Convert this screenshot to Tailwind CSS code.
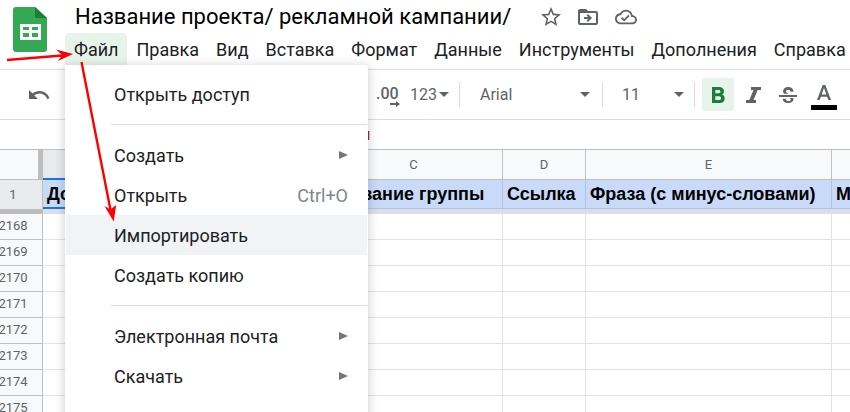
<!DOCTYPE html>
<html lang="ru">
<head>
  <meta charset="UTF-8" />
  <meta name="viewport" content="width=device-width, initial-scale=1" />
  <title>Название проекта/ рекламной кампании/</title>
  <script src="https://cdn.jsdelivr.net/npm/@tailwindcss/browser@4"></script>
</head>
<body class="relative h-screen overflow-hidden bg-white font-['Roboto',sans-serif] text-[#202124]">

  <!-- Header -->
  <header class="flex h-[70px] border-b border-[#dadce0]">
    <a href="#" aria-label="Таблицы" class="w-[65px] shrink-0 pl-[13px] pt-[7px]">
      <svg class="h-[45px] w-[34px]" viewBox="0 0 34 45">
        <path d="M3 0h19l12 11v31a3 3 0 0 1-3 3H3a3 3 0 0 1-3-3V3a3 3 0 0 1 3-3z" fill="#34a853" />
        <path d="M22 0l12 11H22z" fill="#188038" />
        <path fill-rule="evenodd" d="M7 17h21v16H7zM10 20v3h6v-3zM19 20v3h6v-3zM10 26v4h6v-4zM19 26v4h6v-4z" fill="#fff" />
      </svg>
    </a>
    <div class="min-w-0 flex-1">
      <div class="flex h-[33px] items-center text-[#5f6368]">
        <input type="text" aria-label="Название" value="Название проекта/ рекламной кампании/" class="w-[473px] pl-[10px] text-[22px] leading-8 text-black outline-none">
        <button type="button" aria-label="Пометить" class="flex w-[26px] justify-center">
          <svg class="size-6" viewBox="0 0 24 24" fill="currentColor"><path d="M22 9.24l-7.19-.62L12 2 9.19 8.63 2 9.24l5.46 4.73L5.82 21 12 17.27 18.18 21l-1.63-7.03L22 9.24zM12 15.4l-3.76 2.27 1-4.28-3.32-2.88 4.38-.38L12 6.1l1.71 4.04 4.38.38-3.32 2.88 1 4.28L12 15.4z" /></svg>
        </button>
        <button type="button" aria-label="Переместить" class="ml-[11px] flex w-[26px] justify-center">
          <svg class="size-6" viewBox="0 0 24 24" fill="currentColor"><path d="M20 6h-8l-2-2H4c-1.1 0-2 .9-2 2v12c0 1.100.9 2 2 2h16c1.100 0 2-.9 2-2V8c0-1.100-.9-2-2-2zm0 12H4V8h16v10zM12.200 14H8v-2h4.200l-1.600-1.600L12 9l4 4-4 4-1.400-1.400z" /></svg>
        </button>
        <button type="button" aria-label="Состояние документа" class="ml-[12px] flex w-[26px] justify-center">
          <svg class="size-[22px]" viewBox="0 0 24 24" fill="currentColor"><path d="M19.350 10.040C18.670 6.590 15.640 4 12 4 9.110 4 6.600 5.640 5.350 8.040 2.340 8.360 0 10.910 0 14c0 3.310 2.690 6 6 6h13c2.760 0 5-2.240 5-5 0-2.640-2.050-4.780-4.650-4.960zM19 18H6c-2.210 0-4-1.790-4-4 0-2.050 1.530-3.760 3.560-3.970l1.070-.11.5-.95C8.080 7.140 9.940 6 12 6c2.620 0 4.880 1.860 5.390 4.430l.3 1.500 1.530.11c1.560.1 2.780 1.410 2.780 2.960 0 1.650-1.350 3-3 3zM10 14.180l-2.090-2.090L6.500 13.500 10 17l6.010-6.010-1.410-1.410z" /></svg>
        </button>
      </div>
      <nav class="flex h-8 items-center gap-px text-[18px]">
        <button type="button" class="h-8 rounded-t-[4px] bg-[#e6f4ea] px-[9px]">Файл</button>
        <button type="button" class="h-8 px-2">Правка</button>
        <button type="button" class="h-8 px-2">Вид</button>
        <button type="button" class="h-8 px-2">Вставка</button>
        <button type="button" class="h-8 px-2">Формат</button>
        <button type="button" class="h-8 px-2">Данные</button>
        <button type="button" class="h-8 px-2">Инструменты</button>
        <button type="button" class="h-8 px-2">Дополнения</button>
        <button type="button" class="h-8 px-2">Справка</button>
      </nav>
    </div>
  </header>

  <!-- Toolbar -->
  <div class="flex h-[50px] items-center border-b border-[#dadce0] text-[16px] text-[#5f6368]">
    <button type="button" aria-label="Отменить" class="w-[376px] shrink-0 pl-[27px]">
      <svg class="size-6" viewBox="0 0 24 24" fill="currentColor"><path d="M12.500 8c-2.650 0-5.050.99-6.900 2.600L2 7v9h9l-3.620-3.620c1.390-1.160 3.160-1.880 5.120-1.880 3.540 0 6.550 2.310 7.600 5.500l2.370-.78C21.080 11.030 17.150 8 12.500 8z" /></svg>
    </button>
    <button type="button" aria-label="Увеличить число знаков" class="flex w-[34px] shrink-0 flex-col items-start pt-1 font-medium leading-4">
      .00
      <svg class="-mt-px ml-[14px] h-[6px] w-[10px]" viewBox="0 0 10 6" fill="currentColor"><path d="M0 2h6V0l4 3-4 3V4H0z" /></svg>
    </button>
    <button type="button" class="flex w-[49px] shrink-0 items-center gap-[2px]">
      123
      <svg class="h-[5px] w-[10px]" viewBox="0 0 10 5" fill="currentColor"><path d="M0 0h10L5 5z" /></svg>
    </button>
    <div class="flex h-[25px] w-[143px] shrink-0 items-center border-l border-[#dadce0] pl-5">
      <select aria-label="Шрифт" class="w-[100px] appearance-none outline-none"><option>Arial</option></select>
      <svg class="h-[5px] w-[10px]" viewBox="0 0 10 5" fill="currentColor"><path d="M0 0h10L5 5z" /></svg>
    </div>
    <div class="flex h-[25px] w-[92px] shrink-0 items-center border-l border-[#dadce0] pl-[19px]">
      <select aria-label="Размер шрифта" class="w-[52px] appearance-none outline-none"><option>11</option></select>
      <svg class="h-[5px] w-[10px]" viewBox="0 0 10 5" fill="currentColor"><path d="M0 0h10L5 5z" /></svg>
    </div>
    <div class="flex h-[25px] shrink-0 items-center border-l border-[#dadce0] pl-[7px]">
      <button type="button" aria-label="Полужирный" class="flex h-[33px] w-8 items-center justify-center rounded-[3px] bg-[#e6f4ea] text-[#188038]">
        <svg class="h-4 w-[13px]" viewBox="0 0 13 16" fill="currentColor"><path fill-rule="evenodd" d="M0 0h7c3 0 5 1.700 5 4.200 0 1.500-.8 2.700-2 3.300 1.700.6 2.700 2 2.700 3.900 0 2.800-2.100 4.600-5.200 4.600H0zM3.300 2.900v3.400h3.200c1.200 0 2-.6 2-1.700s-.8-1.700-2-1.700zM3.300 9.300v3.800h3.700c1.300 0 2.100-.7 2.100-1.900S8.300 9.300 7 9.300z" /></svg>
      </button>
      <button type="button" aria-label="Курсив" class="ml-3 h-4 w-[15px]">
        <svg class="h-4 w-[15px]" viewBox="0 0 15 16" fill="currentColor"><path d="M5 0h10v3h-3.300L7.500 13H10v3H0v-3h3.300L7.500 3H5z" /></svg>
      </button>
      <button type="button" aria-label="Зачеркнутый" class="ml-[18px] h-4 w-[18px]">
        <svg class="h-4 w-[18px]" viewBox="0 0 18 16" fill="currentColor"><path d="M0 8h18v2H0zM6.300 6.800h3.600C8.100 6.300 7 5.800 7 4.600c0-1.200 1-1.900 2.200-1.900 1.400 0 2.300.7 2.400 2.100h2.900C14.400 1.900 12.300 0 9.200 0 6.200 0 4.100 1.800 4.100 4.500c0 1 .4 1.700 1.100 2.300zM13.500 11h-3.100c.8.300 1.300.7 1.300 1.400 0 1-.9 1.600-2.300 1.600-1.600 0-2.600-.8-2.700-2.300H3.800C3.800 14.400 6 16 9.400 16c3.100 0 5.200-1.500 5.200-3.900 0-.4-.1-.8-.3-1.100z" /></svg>
      </button>
      <button type="button" aria-label="Цвет текста" class="ml-[14px] flex h-[33px] w-[26px] flex-col items-center justify-end pb-px">
        <svg class="mb-[5px] h-[15px] w-[14px]" viewBox="0 0 14 15" fill="currentColor"><path fill-rule="evenodd" d="M5.700 0h2.600L14 15h-2.600l-1.200-3.300H3.800L2.600 15H0zM4.600 9.400h4.800L7 2.900z" /></svg>
        <span class="h-[5px] w-[26px] bg-black"></span>
      </button>
    </div>
  </div>

  <!-- Formula bar -->
  <div class="flex h-[29px] items-center">
    <input type="text" aria-label="Формула" value="л" class="w-full pl-[361px] font-['Liberation_Sans',sans-serif] text-[16px] leading-5 text-[#a31515] outline-none">
  </div>

  <!-- Sheet -->
  <table class="w-full table-fixed border-separate border-spacing-0 text-[13px] text-[#5f6368]">
    <colgroup>
      <col class="w-[43px]"><col class="w-[139px]"><col class="w-[143px]"><col class="w-[178px]"><col class="w-[83px]"><col class="w-[246px]"><col>
    </colgroup>
    <thead>
      <tr class="h-[31px] bg-[#f8f9fa]">
        <td class="border-y border-r-[5px] border-[#bcbcbc]"></td>
        <th class="border-t border-b-2 border-r border-t-[#c0c0c0] border-r-[#c0c0c0] border-b-[#1a73e8] bg-[#e8eaed] p-0 font-normal">A</th>
        <th class="border-y border-r border-[#c0c0c0] p-0 font-normal">B</th>
        <th class="border-y border-r border-[#c0c0c0] p-0 font-normal">C</th>
        <th class="border-y border-r border-[#c0c0c0] p-0 font-normal">D</th>
        <th class="border-y border-r border-[#c0c0c0] p-0 font-normal">E</th>
        <th class="border-y border-[#c0c0c0] p-0 font-normal"></th>
      </tr>
      <tr class="h-[29px] whitespace-nowrap bg-[#c9daf8] text-left font-['Liberation_Sans',sans-serif] text-[18px] leading-6 text-black">
        <th class="border-r border-[#c0c0c0] bg-[#e8eaed] p-0 pr-4 text-center font-['Roboto',sans-serif] text-[13px] font-normal text-[#5f6368]">1</th>
        <th class="overflow-hidden border-b-2 border-r border-b-[#1a73e8] border-r-[#b1c3e4] p-0 pl-1">Домен</th>
        <th class="border-b border-r border-[#b1c3e4] p-0"></th>
        <th class="overflow-hidden border-b border-r border-[#b1c3e4] p-0 pl-1">Название группы</th>
        <th class="overflow-hidden border-b border-r border-[#b1c3e4] p-0 pl-1">Ссылка</th>
        <th class="overflow-hidden border-b border-r border-[#b1c3e4] p-0 pl-1">Фраза (с минус-словами)</th>
        <th class="overflow-hidden border-b border-[#b1c3e4] p-0 pl-1">Минус-слова</th>
      </tr>
      <tr class="h-[5px]">
        <td class="bg-[#bcbcbc] p-0"></td>
        <td colspan="6" class="bg-[#dadfe8] p-0"></td>
      </tr>
    </thead>
    <tbody id="rows"></tbody>
  </table>

  <!-- File menu -->
  <div role="menu" class="absolute left-[65px] top-[65px] z-10 h-[400px] w-[303px] rounded-tr-[4px] border-x border-white bg-white pt-[10px] text-[18px] shadow-[0_2px_8px_2px_rgba(60,64,67,0.2)]">
    <button type="button" role="menuitem" class="flex h-10 w-full items-center pb-0.5 pl-12">Открыть доступ</button>
    <hr class="mb-[10px] ml-[45px] mt-[9px] border-[#dadce0]">
    <button type="button" role="menuitem" class="flex h-10 w-full items-center justify-between pl-12 pr-[19px]">Создать
      <svg class="h-2 w-[9px]" viewBox="0 0 9 8" fill="#777"><path d="M0 0l9 4-9 4z" /></svg>
    </button>
    <button type="button" role="menuitem" class="flex h-10 w-full items-center justify-between pl-12 pr-[19px]">Открыть <span class="text-[#80868b]">Ctrl+O</span></button>
    <button type="button" role="menuitem" class="flex h-10 w-full items-center bg-[#f1f3f4] pl-12">Импортировать</button>
    <button type="button" role="menuitem" class="flex h-10 w-full items-center pl-12">Создать копию</button>
    <hr class="mb-[10px] ml-[45px] mt-[10px] border-[#dadce0]">
    <button type="button" role="menuitem" class="flex h-10 w-full items-center justify-between pl-12 pr-[19px]">Электронная почта
      <svg class="h-2 w-[9px]" viewBox="0 0 9 8" fill="#777"><path d="M0 0l9 4-9 4z" /></svg>
    </button>
    <button type="button" role="menuitem" class="flex h-10 w-full items-center justify-between pl-12 pr-[19px]">Скачать
      <svg class="h-2 w-[9px]" viewBox="0 0 9 8" fill="#777"><path d="M0 0l9 4-9 4z" /></svg>
    </button>
  </div>

  <!-- Red arrows -->
  <svg class="pointer-events-none absolute left-0 top-0 z-20 h-[230px] w-[130px]" viewBox="0 0 130 230" fill="#f00" stroke="#f00">
    <path d="M7 60L62 55.500M81.500 62L110.500 210" stroke-width="2.400" />
    <path d="M73 54L56 49.500l6 5.500-4 6zM113.700 221.500l2.500-16.500-5.700 4.500-6-3.500z" stroke="none" />
  </svg>

  <script>
    const rows = document.getElementById("rows");
    for (let n = 2168; n <= 2175; n++) {
      const cells = '<td class="border-b border-r border-[#e2e3e3] p-0"></td>'.repeat(5);
      rows.innerHTML += `<tr class="h-[26px]"><th class="border-b border-r border-[#c0c0c0] bg-[#f8f9fa] p-0 pb-px pr-4 font-normal"><span class="flex justify-center">${n}</span></th>${cells}<td class="border-b border-[#e2e3e3] p-0"></td></tr>`;
    }
  </script>
</body>
</html>
